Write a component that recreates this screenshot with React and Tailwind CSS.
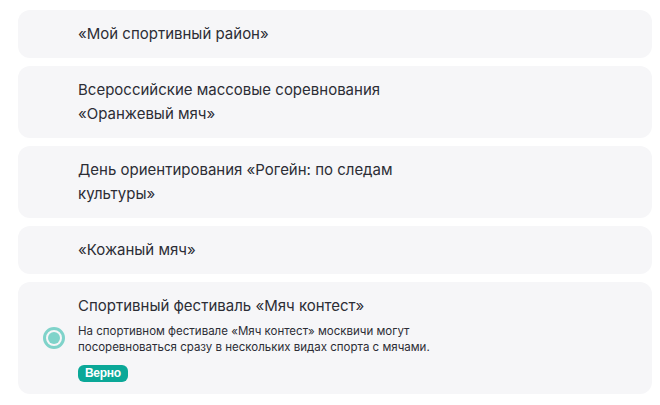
export default function App() {
  const items = [
    "«Мой спортивный район»",
    "Всероссийские массовые соревнования\n«Оранжевый мяч»",
    "День ориентирования «Рогейн: по следам\nкультуры»",
    "«Кожаный мяч»",
  ];
  return (
    <div className="w-[660px] h-[405px] bg-white pt-[10px] pl-[18px] pr-[8px] flex flex-col gap-[8px] font-['Inter',sans-serif]">
      {items.map((t, i) => (
        <div key={i} className="rounded-[12px] bg-[#f6f6f8] pl-[60px] pr-4 py-[12px] text-[15px] leading-[24px] text-[#2c2d35] whitespace-pre-line">
          {t}
        </div>
      ))}
      <div className="rounded-[12px] bg-[#f6f6f8] pl-[25px] pr-4 pt-[12px] pb-[12px] flex items-center gap-[13px]">
        <div className="w-[22px] h-[22px] rounded-full border-[3px] border-[#7fd3ca] flex items-center justify-center shrink-0">
          <div className="w-[12px] h-[12px] rounded-full bg-[#7fd3ca]" />
        </div>
        <div className="flex flex-col">
          <div className="text-[15px] leading-[24px] text-[#2c2d35]">Спортивный фестиваль «Мяч контест»</div>
          <div className="mt-[5px] text-[11.5px] leading-[16px] text-[#2c2d35]">
            На спортивном фестивале «Мяч контест» москвичи могут
            <br />
            посоревноваться сразу в нескольких видах спорта с мячами.
          </div>
          <div className="mt-[10px] self-start h-[17px] px-[7px] rounded-[6px] bg-[#0ba898] text-white text-[12px] font-bold leading-[17px] font-['Liberation_Sans',sans-serif] tracking-[-0.3px]">
            Верно
          </div>
        </div>
      </div>
    </div>
  );
}
